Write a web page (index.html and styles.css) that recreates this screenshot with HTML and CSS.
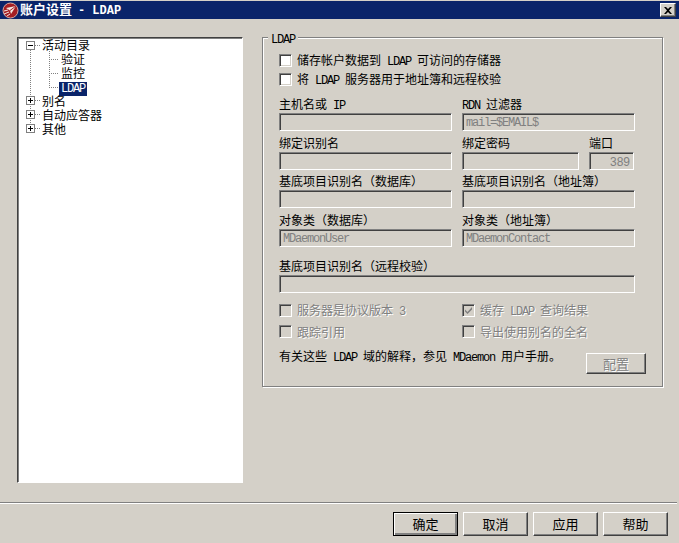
FILE: index.html
```html
<!DOCTYPE html>
<html lang="zh-CN">
<head>
<meta charset="utf-8">
<title>账户设置 - LDAP</title>
<link rel="stylesheet" href="styles.css">
</head>
<body>
<div class="window">
  <header class="titlebar">
    <svg class="app-icon" width="17" height="17" viewBox="0 0 17 17">
      <circle cx="8.5" cy="8.5" r="7.5" fill="#a51f24"/>
      <circle cx="8.5" cy="8.5" r="7.5" fill="none" stroke="#d9a9a0" stroke-width="1"/>
      <path d="M4 6 L14 4 L9 12 L8 8.500 Z" fill="#f3e6df"/>
      <path d="M8 8.500 L14 4" stroke="#a51f24" stroke-width="1" fill="none"/>
      <path d="M2 9 L6 8 M2 12 L7 10 M5 14 L8 12" stroke="#f3e6df" stroke-width="1" fill="none"/>
    </svg>
    <span class="title-text">账户设置 <span class="title-lat">- LDAP</span></span>
    <button class="close" aria-label="关闭">
      <svg width="8" height="7" viewBox="0 0 8 7"><path d="M0 0h2l2 2 2-2h2L5 3.500 8 7H6L4 5 2 7H0l3-3.500z" fill="#000"/></svg>
    </button>
  </header>

  <main class="content">
    <nav class="tree">
      <svg class="tree-lines" width="70" height="110" viewBox="0 0 70 110">
        <g stroke="#808080" stroke-dasharray="1 1" fill="none">
          <path d="M12.500 13V88M31.500 12V50.500M17 8.500H22M17 63.500H22M17 77.500H22M17 91.500H22M31 22.500H41M31 36.500H41M31 50.500H41"/>
        </g>
        <g fill="#fff" stroke="#808080">
          <rect x="8.500" y="4.500" width="8" height="8"/>
          <rect x="8.500" y="59.500" width="8" height="8"/>
          <rect x="8.500" y="73.500" width="8" height="8"/>
          <rect x="8.500" y="87.500" width="8" height="8"/>
        </g>
        <path d="M10 8.500h5M10 63.500h5M12.500 61v5M10 77.500h5M12.500 75v5M10 91.500h5M12.500 89v5" stroke="#000" fill="none"/>
      </svg>
      <div class="node">活动目录</div>
      <div class="node sub">验证</div>
      <div class="node sub">监控</div>
      <div class="node sub"><span class="selected">LDAP</span></div>
      <div class="node">别名</div>
      <div class="node">自动应答器</div>
      <div class="node">其他</div>
    </nav>

    <section class="group">
      <div class="legend"><span class="lat">LDAP</span></div>

      <div class="check-list">
        <label class="check"><span class="box"></span><span>储存帐户数据到<span class="lat"> LDAP </span>可访问的存储器</span></label>
        <label class="check"><span class="box"></span><span>将<span class="lat"> LDAP </span>服务器用于地址簿和远程校验</span></label>
      </div>

      <div class="fields">
        <div class="row">
          <div class="field"><span class="flabel">主机名或<span class="lat"> IP</span></span><input class="text" disabled></div>
          <div class="field"><span class="flabel"><span class="lat">RDN </span>过滤器</span><input class="text" disabled value="mail=$EMAIL$"></div>
        </div>
        <div class="row">
          <div class="field"><span class="flabel">绑定识别名</span><input class="text" disabled></div>
          <div class="pair">
            <div class="field"><span class="flabel">绑定密码</span><input class="text" disabled></div>
            <div class="field"><span class="flabel">端口</span><input class="text port" disabled value="389"></div>
          </div>
        </div>
        <div class="row tight">
          <div class="field"><span class="flabel">基底项目识别名（数据库）</span><input class="text" disabled></div>
          <div class="field"><span class="flabel">基底项目识别名（地址簿）</span><input class="text" disabled></div>
        </div>
        <div class="row">
          <div class="field"><span class="flabel">对象类（数据库）</span><input class="text" disabled value="MDaemonUser"></div>
          <div class="field"><span class="flabel">对象类（地址簿）</span><input class="text" disabled value="MDaemonContact"></div>
        </div>
        <div class="row wide">
          <div class="field"><span class="flabel">基底项目识别名（远程校验）</span><input class="text" disabled></div>
        </div>
      </div>

      <div class="options">
        <label class="check off"><span class="box"></span><span>服务器是协议版本<span class="lat"> 3</span></span></label>
        <label class="check off"><span class="box"><svg width="9" height="9" viewBox="0 0 9 9"><path d="M1 3.500l2.500 2.500L8 1v2.500L3.500 8 1 5.500z" fill="#808080"/></svg></span><span>缓存<span class="lat"> LDAP </span>查询结果</span></label>
        <label class="check off"><span class="box"></span><span>跟踪引用</span></label>
        <label class="check off"><span class="box"></span><span>导出使用别名的全名</span></label>
      </div>

      <div class="note-row">
        <p class="note">有关这些<span class="lat"> LDAP </span>域的解释，参见<span class="lat"> MDaemon </span>用户手册。</p>
        <button class="btn config" disabled>配置</button>
      </div>
    </section>
  </main>

  <hr class="separator">

  <footer class="actions">
    <button class="btn default">确定</button>
    <button class="btn">取消</button>
    <button class="btn">应用</button>
    <button class="btn">帮助</button>
  </footer>
</div>
</body>
</html>
```

FILE: styles.css
```css
* { box-sizing: border-box; }

html, body {
  margin: 0;
  padding: 0;
  background: #d4d0c8;
}

body {
  width: 679px;
  height: 543px;
  overflow: hidden;
  font: 12px/14px "Noto Sans CJK SC", "Liberation Sans", sans-serif;
  color: #000;
}

.window {
  display: flex;
  flex-direction: column;
  height: 543px;
  padding-top: 1px;
}

.lat {
  font-family: "Liberation Mono", "Noto Sans CJK SC", monospace;
  font-size: 12px;
  letter-spacing: -1.2px;
}

.titlebar {
  display: flex;
  align-items: center;
  height: 18px;
  background: #0a246a;
  color: #fff;
  padding: 0 3px 0 2px;
}

.app-icon { flex: none; margin-right: 1px; }

.title-text {
  flex: 1;
  font-size: 13px;
  font-weight: 700;
  white-space: pre;
}

.title-lat {
  font-family: "Liberation Mono", monospace;
  font-size: 12px;
  letter-spacing: 0;
  margin-left: 3px;
}

.close {
  width: 16px;
  height: 14px;
  padding: 0;
  display: flex;
  align-items: center;
  justify-content: center;
  background: #d4d0c8;
  border: 1px solid;
  border-color: #fff #404040 #404040 #fff;
  box-shadow: inset -1px -1px #808080;
}

.content {
  display: flex;
  align-items: flex-start;
  gap: 19px;
  padding: 18px 0 0 17px;
}

.tree {
  position: relative;
  width: 226px;
  height: 446px;
  flex: none;
  background: #fff;
  border: 1px solid;
  border-color: #404040 #fff #fff #404040;
  box-shadow: inset 1px 1px #808080;
  padding: 0 0 0 24px;
}

.tree-lines {
  position: absolute;
  left: 0;
  top: -1px;
  pointer-events: none;
}

.node {
  height: 14px;
  line-height: 14px;
  white-space: nowrap;
}

.node.sub { padding-left: 19px; }

.selected {
  display: inline-block;
  width: 28px;
  height: 14px;
  margin-left: -2px;
  padding-left: 2px;
  background: #0a246a;
  color: #fff;
  font-family: "Liberation Mono", monospace;
  font-size: 12px;
  letter-spacing: -1.2px;
}

.group {
  position: relative;
  width: 401px;
  height: 350px;
  flex: none;
  border: 1px solid #808080;
  box-shadow: inset 1px 1px #fff, 1px 1px #fff;
  padding: 16px 16px 0;
}

.legend {
  position: absolute;
  left: 5px;
  top: -6px;
  height: 12px;
  line-height: 12px;
  padding: 0 3px;
  background: #d4d0c8;
}

.check-list {
  display: flex;
  flex-direction: column;
  gap: 6px;
}

.check {
  display: flex;
  align-items: center;
  gap: 5px;
  height: 13px;
  line-height: 13px;
  white-space: nowrap;
}

.box {
  flex: none;
  display: flex;
  align-items: center;
  justify-content: center;
  width: 13px;
  height: 13px;
  background: #fff;
  border: 1px solid;
  border-color: #808080 #fff #fff #808080;
  box-shadow: inset 1px 1px #404040, inset -1px -1px #d4d0c8;
}

.check.off { color: #808080; text-shadow: 1px 1px #fff; }
.check.off .box { background: #d4d0c8; }

.fields {
  display: flex;
  flex-direction: column;
  gap: 6px;
  margin-top: 12px;
}

.row {
  display: grid;
  grid-template-columns: 173px 173px;
  column-gap: 10px;
}

.row.tight { margin-top: -1px; }
.row.wide {
  grid-template-columns: 356px;
  margin-top: 7px;
}

.pair {
  display: grid;
  grid-template-columns: 117px 45px;
  column-gap: 10px;
}

.field {
  display: flex;
  flex-direction: column;
  min-width: 0;
}

.flabel {
  height: 15px;
  line-height: 11px;
  white-space: nowrap;
}

.text {
  display: block;
  width: 100%;
  height: 18px;
  margin: 0;
  padding: 1px 0 0 3px;
  background: #d4d0c8;
  border: 1px solid;
  border-color: #808080 #fff #fff #808080;
  box-shadow: inset 1px 1px #404040;
  border-radius: 0;
  outline: none;
  color: #808080;
  font: 400 12px/14px "Liberation Mono", monospace;
  letter-spacing: -1.2px;
  -webkit-text-fill-color: #808080;
  opacity: 1;
}

.port {
  text-align: right;
  padding-right: 3px;
  font-family: "Liberation Sans", sans-serif;
  font-size: 12px;
  letter-spacing: 0;
}

.options {
  display: grid;
  grid-template-columns: 173px 173px;
  column-gap: 10px;
  row-gap: 8px;
  margin-top: 11px;
}

.note-row {
  display: flex;
  justify-content: space-between;
  align-items: flex-start;
  width: 367px;
  margin-top: 11px;
}

.note {
  margin: 0;
  white-space: nowrap;
}

.btn {
  width: 65px;
  height: 24px;
  padding: 0;
  font: inherit;
  font-size: 13px;
  color: #000;
  background: #d4d0c8;
  border: 1px solid;
  border-color: #fff #404040 #404040 #fff;
  box-shadow: inset -1px -1px #808080;
  border-radius: 0;
}

.btn.default {
  border-color: #000;
  box-shadow: inset 1px 1px #fff, inset -2px -2px #808080, inset -1px -1px #404040;
}

.config {
  width: 60px;
  height: 21px;
  margin-top: 4px;
  color: #808080;
  text-shadow: 1px 1px #fff;
}

.separator {
  width: 677px;
  height: 2px;
  margin: 19px 0 0;
  border: 0;
  border-top: 1px solid #808080;
  border-bottom: 1px solid #fff;
}

.actions {
  display: flex;
  justify-content: flex-end;
  gap: 5px;
  padding: 8px 11px 0 0;
}
```
